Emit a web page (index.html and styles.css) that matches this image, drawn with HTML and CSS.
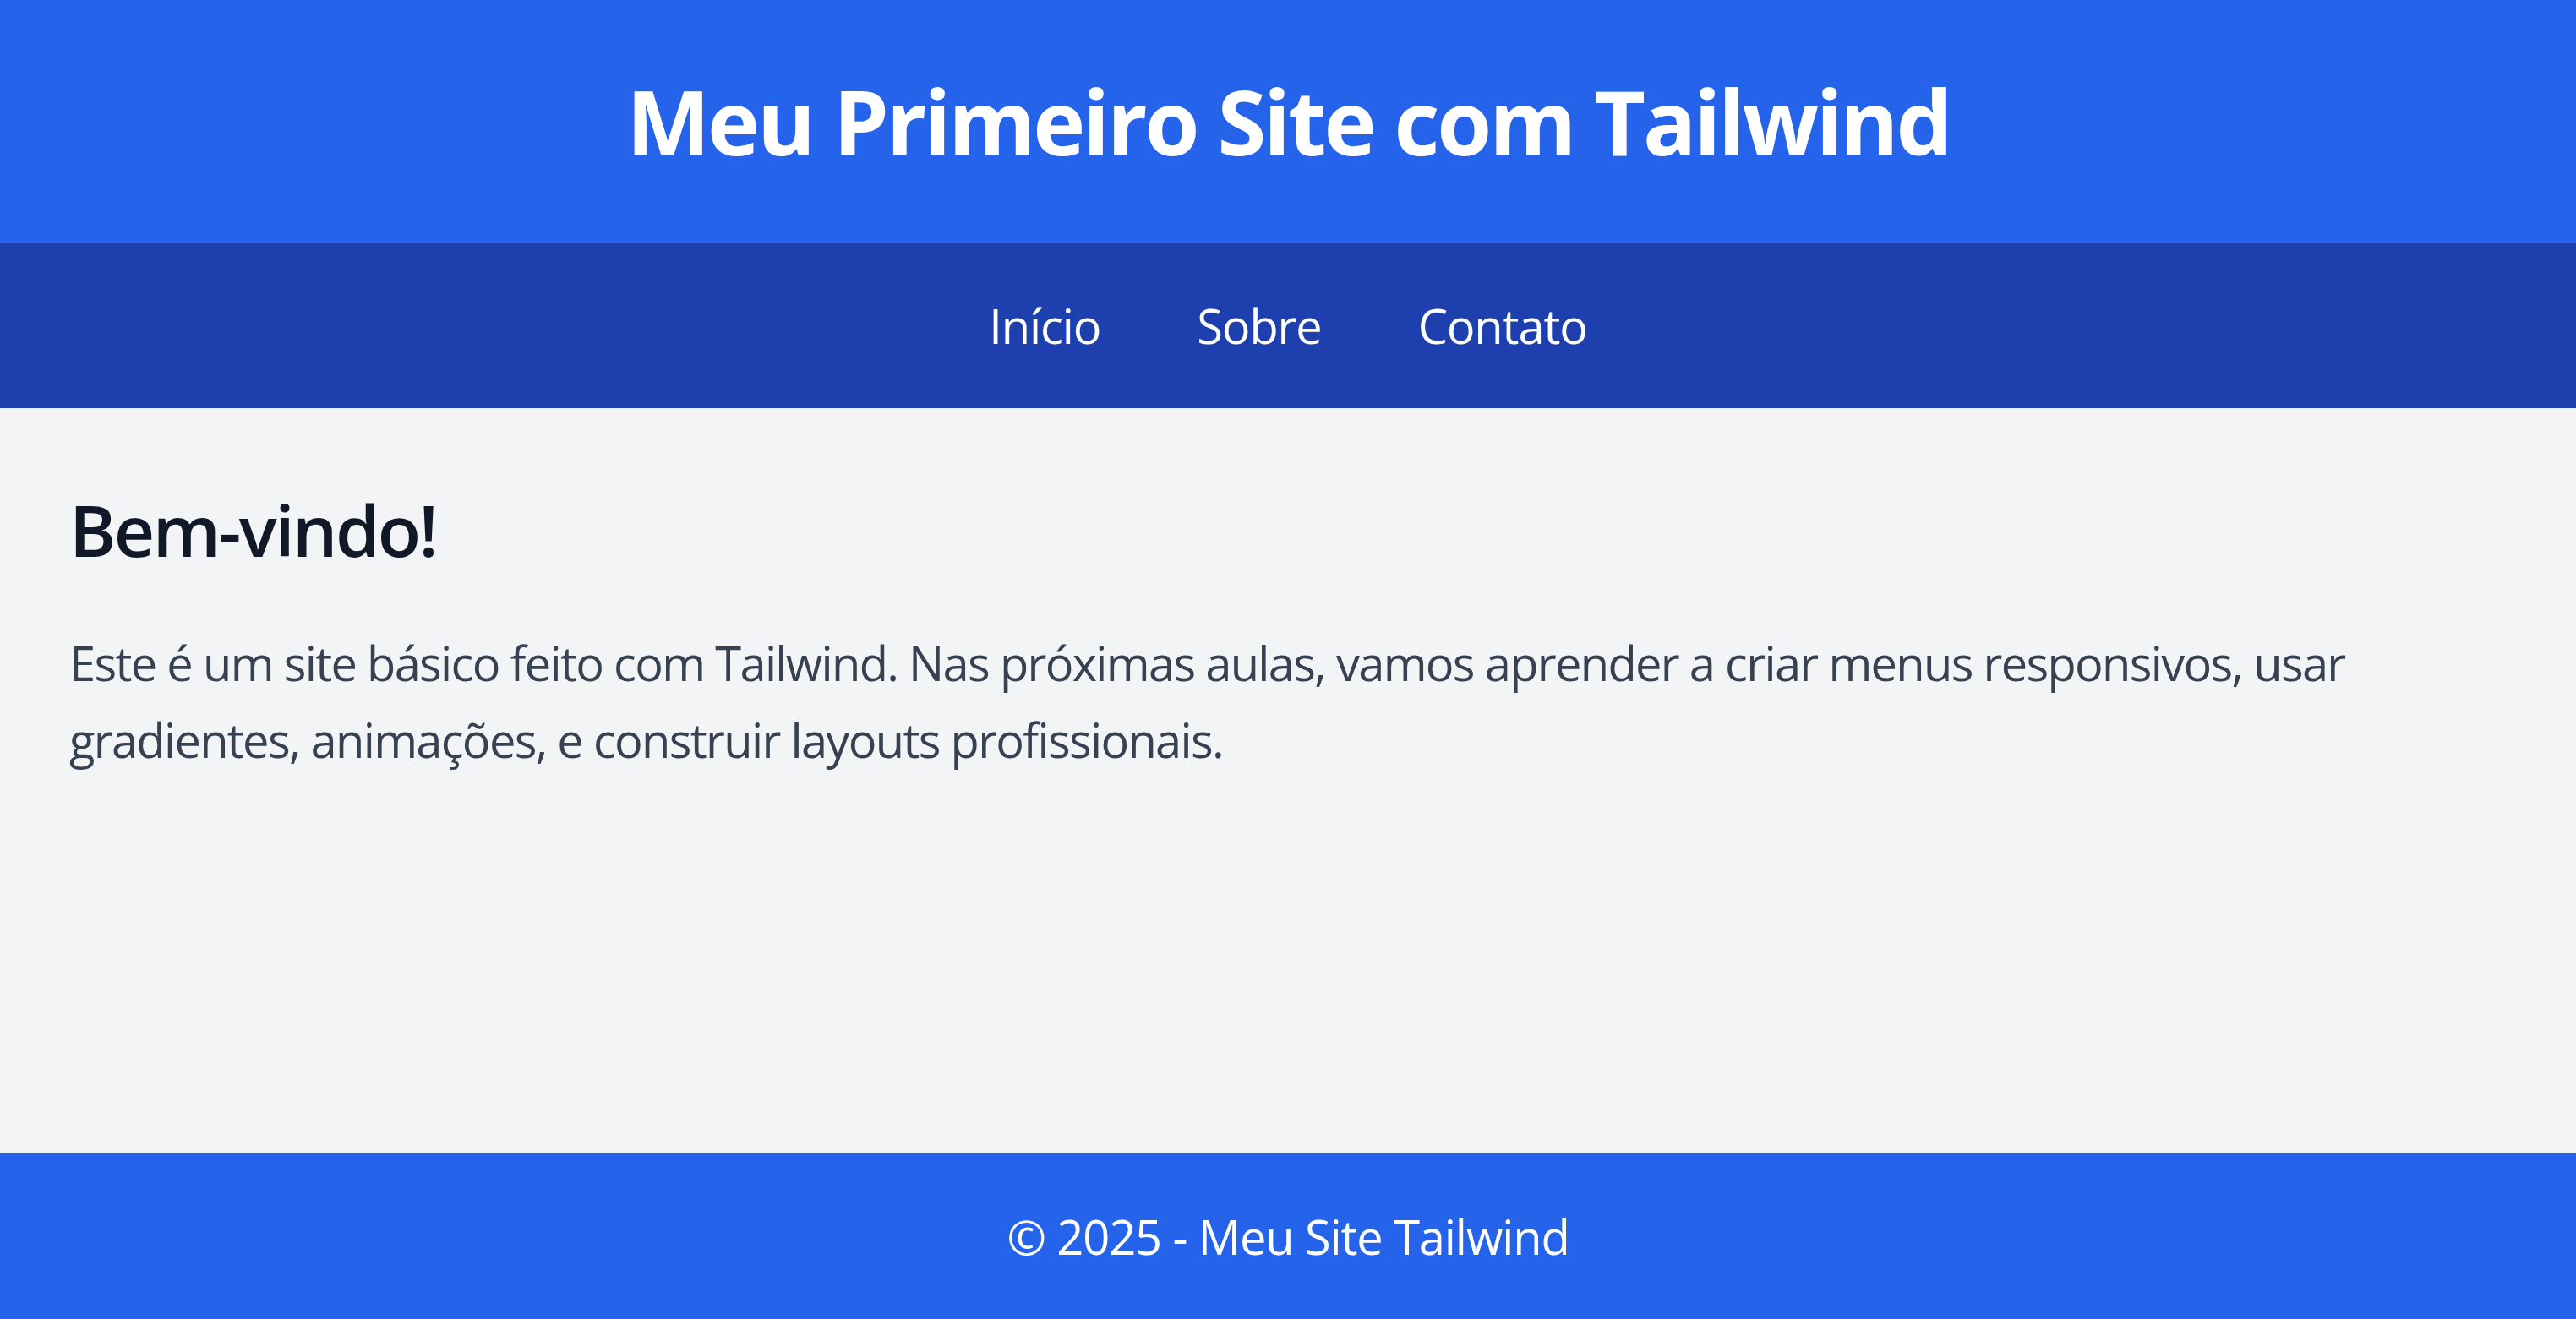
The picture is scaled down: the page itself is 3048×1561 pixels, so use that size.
FILE: index.html
```html
<!DOCTYPE html>
<html lang="pt-BR">
<head>
<meta charset="utf-8">
<title>Meu Primeiro Site com Tailwind</title>
<link rel="stylesheet" href="styles.css">
</head>
<body>
<header class="site-header">
  <h1 class="site-title">Meu Primeiro Site com Tailwind</h1>
</header>
<nav class="site-nav">
  <a href="#" class="nav-link">Início</a>
  <a href="#" class="nav-link">Sobre</a>
  <a href="#" class="nav-link">Contato</a>
</nav>
<main class="content">
  <h2 class="content-title">Bem-vindo!</h2>
  <p class="content-text">Este é um site básico feito com Tailwind. Nas próximas aulas, vamos aprender a criar menus responsivos, usar gradientes, animações, e construir layouts profissionais.</p>
</main>
<footer class="site-footer">
  <p class="footer-text">© 2025 - Meu Site Tailwind</p>
</footer>
</body>
</html>
```

FILE: styles.css
```css
* { box-sizing: border-box; }
html, body { margin: 0; padding: 0; }
body {
  min-height: 100vh;
  display: flex;
  flex-direction: column;
  background: #f3f4f6;
  font-family: "Open Sans", "Noto Sans", sans-serif;
}
.site-header {
  background: #2563eb;
  color: #ffffff;
  padding: 80px 24px;
  text-align: center;
}
.site-title {
  margin: 0;
  font-size: 105px;
  line-height: 127px;
  font-weight: 700;
  letter-spacing: -0.03em;
}
.site-nav {
  background: #1e40af;
  padding: 56px 24px;
  display: flex;
  justify-content: center;
  gap: 114px;
}
.nav-link {
  color: #ffffff;
  text-decoration: none;
  font-size: 56px;
  line-height: 84px;
  letter-spacing: -0.02em;
}
.content {
  flex: 1;
  padding: 88px 82px 84px;
}
.content-title {
  margin: 0 0 56px;
  font-size: 84px;
  line-height: 112px;
  font-weight: 600;
  color: #111827;
  letter-spacing: -0.03em;
}
.content-text {
  margin: 0;
  font-size: 56px;
  line-height: 91px;
  color: #374151;
  letter-spacing: -0.03em;
}
.site-footer {
  background: #2563eb;
  color: #ffffff;
  padding: 56px 24px;
  text-align: center;
}
.footer-text {
  margin: 0;
  font-size: 56px;
  line-height: 84px;
  letter-spacing: -0.02em;
}
```
